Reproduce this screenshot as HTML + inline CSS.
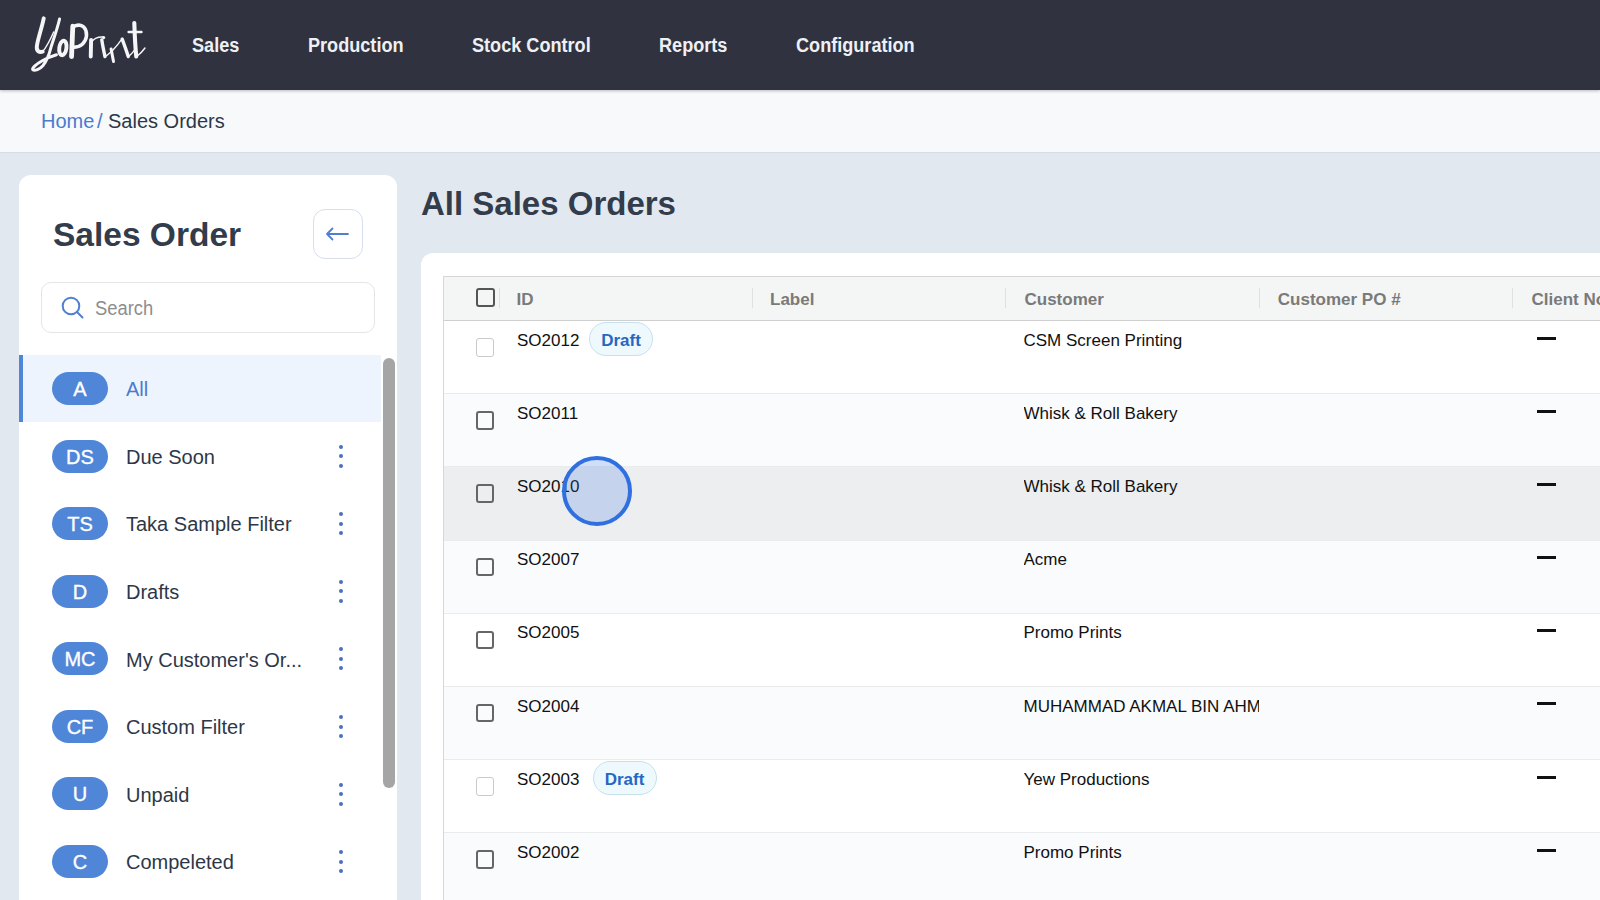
<!DOCTYPE html><html><head><meta charset="utf-8"><style>*{box-sizing:border-box;margin:0;padding:0}
html,body{width:1600px;height:900px;overflow:hidden}
body{background:#e2e8f0;font-family:"Liberation Sans",sans-serif;position:relative}
#nav{position:absolute;left:0;top:0;width:1600px;height:90px;background:#30333f;box-shadow:0 1px 3px rgba(0,0,0,.25);z-index:2}
#logo{position:absolute;left:20px;top:5px}
.navi{position:absolute;top:34.8px;font-size:20px;line-height:20px;font-weight:bold;color:#eef0f5;white-space:nowrap;transform:scaleX(.905);transform-origin:0 0}
#crumb{position:absolute;left:0;top:90px;width:1600px;height:62px;background:#f8f9fb;box-shadow:0 1px 1px rgba(0,0,0,.05)}
#crumb span{position:absolute;top:20.9px;font-size:20px;line-height:20px;white-space:nowrap}
#crumb .home{left:41px;color:#4a7bd0}
#crumb .sl{left:97px;color:#4a7bd0}
#crumb .cur{left:108px;color:#2d3748}
#side{position:absolute;left:19px;top:175px;width:378px;height:760px;background:#fff;border-radius:12px}
.stitle{position:absolute;left:34px;top:43.4px;font-size:33.5px;line-height:33.5px;font-weight:bold;color:#323c4b;white-space:nowrap}
.backbtn{position:absolute;left:294px;top:33.5px;width:50px;height:50px;border:1px solid #d6deef;border-radius:12px}
.backbtn svg{position:absolute;left:11px;top:17.5px}
.search{position:absolute;left:22px;top:107px;width:334px;height:51px;border:1px solid #e3e5e8;border-radius:10px}
.sico{position:absolute;left:19px;top:13px}
.ph{position:absolute;left:53px;top:15px;font-size:20px;line-height:20px;color:#8d8d8d;transform:scaleX(.917);transform-origin:0 0}
.item{position:absolute;left:19px;width:362px;height:67.6px}
.item.sel{background:#edf4fe;border-left:4px solid #5086d8}
.badge{position:absolute;left:33px;top:17.3px;width:56px;height:33px;padding-top:1px;border-radius:17px;background:#5086d8;color:#fff;font-size:20px;line-height:33px;text-align:center;-webkit-text-stroke:0.35px #fff}
.sel .badge{left:29px}
.itxt{position:absolute;left:107px;top:24.6px;font-size:20px;line-height:20px;color:#2d3748;white-space:nowrap}
.sel .itxt{left:103px;color:#4a7bd0}
.kebab{position:absolute;left:320px;top:22.5px;width:4px;height:24px}
.kebab i{position:absolute;left:0;width:4px;height:4px;border-radius:50%;background:#4a70c2}
#sbar{position:absolute;left:383px;top:357.5px;width:12px;height:430px;border-radius:6px;background:#a5a5a5}
.mtitle{position:absolute;left:421px;top:186.5px;font-size:33px;line-height:33px;font-weight:bold;color:#323c4b;white-space:nowrap}
#main{position:absolute;left:421px;top:253px;width:1220px;height:700px;background:#fff;border-radius:12px}
#tbl{position:absolute;left:442.5px;top:276px;width:1200px;height:700px;border-left:1.5px solid #d8d8d8;border-top:1.5px solid #d5d5d5}
.thead{position:absolute;left:0;top:0;width:1200px;height:44px;background:#f4f6f5;border-bottom:1px solid #cfcfcf;z-index:1}
.hsep{position:absolute;top:10.5px;width:1px;height:20px;background:#e0e0e0}
.hcell{position:absolute;top:13.6px;font-size:17px;line-height:17px;font-weight:bold;color:#7a7a7a;white-space:nowrap}
.cb{position:absolute;left:32px;top:17px;width:18.5px;height:18.5px;border:2px solid #666;border-radius:3px;background:transparent}
.hcb{top:10.75px;width:19px;height:19px;border-color:#555}
.cb.dis{border-color:#cacaca;border-width:1.5px}
.row{position:absolute;left:0;width:1200px;height:73.15px;background:#fff;border-top:1px solid #e9ebec}
.row.alt{background:#fafbfd}
.row.hov{background:#eceeef}
.cell{position:absolute;top:10.8px;font-size:17px;line-height:17px;color:#111;white-space:nowrap}
.cell.id{left:73.5px}
.cell.cust{left:580px;width:235px;overflow:hidden}
.draft{position:absolute;left:145.5px;top:0.7px;width:64px;height:34px;border-radius:17px;background:#eef9fe;border:1px solid #c8e0ec;color:#2767c2;font-weight:bold;font-size:17px;line-height:35px;text-align:center}
.dash{position:absolute;left:1093px;top:15.5px;width:19px;height:3px;background:#111}
#cursor{position:absolute;left:562px;top:456px;width:70px;height:70px;border-radius:50%;border:4px solid #2f6fe0;background:rgba(45,110,225,.2);z-index:5}
</style></head><body>
<div id="nav"><svg id="logo" width="140" height="80" viewBox="0 0 1575 900"><g fill="none" stroke="#f6f6f8" stroke-linecap="round" stroke-linejoin="round">
<path d="M267 150 C245 260 200 380 190 460 C182 520 215 535 255 525" stroke-width="44"/>
<path d="M255 525 C300 470 345 380 379 304" stroke-width="16"/>
<path d="M445 158 C420 270 365 420 346 485 C330 550 305 620 260 680 C220 725 165 745 145 730 C130 712 175 670 255 625 C310 595 360 575 410 560" stroke-width="34"/>
<ellipse cx="482" cy="483" rx="40" ry="82" stroke-width="44" transform="rotate(8 482 483)"/>
<path d="M580 580 L594 238" stroke-width="54"/>
<path d="M598 245 C640 222 712 205 742 290 C765 370 720 445 660 466 C635 474 620 476 606 476" stroke-width="40"/>
<path d="M800 392 L796 580" stroke-width="44"/>
<path d="M810 410 C840 370 880 356 935 360" stroke-width="16"/>
<circle cx="941" cy="366" r="18" fill="#f6f6f8" stroke="none"/>
<path d="M920 392 C930 460 945 530 956 580" stroke-width="38"/>
<path d="M956 580 C990 560 1020 530 1046 506 C1080 470 1120 420 1151 375" stroke-width="15"/>
<path d="M1025 495 L1052 636" stroke-width="34"/>
<path d="M1150 384 C1170 440 1200 520 1218 580" stroke-width="38"/>
<path d="M1218 582 C1250 560 1280 520 1300 492" stroke-width="15"/>
<path d="M1286 202 C1290 330 1298 480 1308 580" stroke-width="46"/>
<path d="M1222 304 L1366 304" stroke-width="28"/>
<path d="M1310 582 C1340 560 1380 520 1406 484" stroke-width="16"/>
</g></svg>

<div class="navi" style="left:192px">Sales</div>
<div class="navi" style="left:308px">Production</div>
<div class="navi" style="left:472px">Stock Control</div>
<div class="navi" style="left:659px">Reports</div>
<div class="navi" style="left:796px">Configuration</div>
</div>
<div id="crumb"><span class="home">Home</span><span class="sl">/</span><span class="cur">Sales Orders</span></div>
<div id="side"><div class="stitle">Sales Order</div>
<div class="backbtn"><svg width="24" height="14" viewBox="0 0 24 14"><path d="M23 7H2M7.5 1.5L2 7l5.5 5.5" fill="none" stroke="#4f7fd0" stroke-width="1.8" stroke-linecap="round" stroke-linejoin="round"/></svg></div>
<div class="search"><svg class="sico" width="24" height="24" viewBox="0 0 24 24"><circle cx="10" cy="10" r="8.3" fill="none" stroke="#4f7fd0" stroke-width="2"/><path d="M16 16l5.5 5.5" stroke="#4f7fd0" stroke-width="2" stroke-linecap="round"/></svg><span class="ph">Search</span></div>
</div>
<div class="item sel" style="top:354.70px"><div class="badge">A</div><div class="itxt">All</div>
</div>
<div class="item" style="top:422.27px"><div class="badge">DS</div><div class="itxt">Due Soon</div>
<div class="kebab"><i style="top:0"></i><i style="top:9.5px"></i><i style="top:19px"></i></div>
</div>
<div class="item" style="top:489.84px"><div class="badge">TS</div><div class="itxt">Taka Sample Filter</div>
<div class="kebab"><i style="top:0"></i><i style="top:9.5px"></i><i style="top:19px"></i></div>
</div>
<div class="item" style="top:557.41px"><div class="badge">D</div><div class="itxt">Drafts</div>
<div class="kebab"><i style="top:0"></i><i style="top:9.5px"></i><i style="top:19px"></i></div>
</div>
<div class="item" style="top:624.98px"><div class="badge">MC</div><div class="itxt">My Customer's Or...</div>
<div class="kebab"><i style="top:0"></i><i style="top:9.5px"></i><i style="top:19px"></i></div>
</div>
<div class="item" style="top:692.55px"><div class="badge">CF</div><div class="itxt">Custom Filter</div>
<div class="kebab"><i style="top:0"></i><i style="top:9.5px"></i><i style="top:19px"></i></div>
</div>
<div class="item" style="top:760.12px"><div class="badge">U</div><div class="itxt">Unpaid</div>
<div class="kebab"><i style="top:0"></i><i style="top:9.5px"></i><i style="top:19px"></i></div>
</div>
<div class="item" style="top:827.69px"><div class="badge">C</div><div class="itxt">Compeleted</div>
<div class="kebab"><i style="top:0"></i><i style="top:9.5px"></i><i style="top:19px"></i></div>
</div>
<div id="sbar"></div>
<div class="mtitle">All Sales Orders</div>
<div id="main"></div>
<div id="tbl">
<div class="thead"><div class="cb hcb"></div><div class="hsep" style="left:55.5px"></div>
<div class="hcell" style="left:73px">ID</div>
<div class="hsep" style="left:308.5px"></div>
<div class="hcell" style="left:326.5px">Label</div>
<div class="hsep" style="left:561.75px"></div>
<div class="hcell" style="left:581px">Customer</div>
<div class="hsep" style="left:815.8px"></div>
<div class="hcell" style="left:834.3px">Customer PO #</div>
<div class="hsep" style="left:1068.7px"></div>
<div class="hcell" style="left:1088px">Client No</div>
</div>
<div class="row" style="top:43.10px"><div class="cb dis"></div><div class="cell id">SO2012</div>
<div class="draft" style="left:145.5px">Draft</div>
<div class="cell cust">CSM Screen Printing</div><div class="dash"></div></div>
<div class="row alt" style="top:116.25px"><div class="cb"></div><div class="cell id">SO2011</div>
<div class="cell cust">Whisk &amp; Roll Bakery</div><div class="dash"></div></div>
<div class="row hov" style="top:189.40px"><div class="cb"></div><div class="cell id">SO2010</div>
<div class="cell cust">Whisk &amp; Roll Bakery</div><div class="dash"></div></div>
<div class="row alt" style="top:262.55px"><div class="cb"></div><div class="cell id">SO2007</div>
<div class="cell cust">Acme</div><div class="dash"></div></div>
<div class="row" style="top:335.70px"><div class="cb"></div><div class="cell id">SO2005</div>
<div class="cell cust">Promo Prints</div><div class="dash"></div></div>
<div class="row alt" style="top:408.85px"><div class="cb"></div><div class="cell id">SO2004</div>
<div class="cell cust">MUHAMMAD AKMAL BIN AHMAD</div><div class="dash"></div></div>
<div class="row" style="top:482.00px"><div class="cb dis"></div><div class="cell id">SO2003</div>
<div class="draft" style="left:149px">Draft</div>
<div class="cell cust">Yew Productions</div><div class="dash"></div></div>
<div class="row alt" style="top:555.15px"><div class="cb"></div><div class="cell id">SO2002</div>
<div class="cell cust">Promo Prints</div><div class="dash"></div></div>
</div>
<div id="cursor"></div>
</body></html>
